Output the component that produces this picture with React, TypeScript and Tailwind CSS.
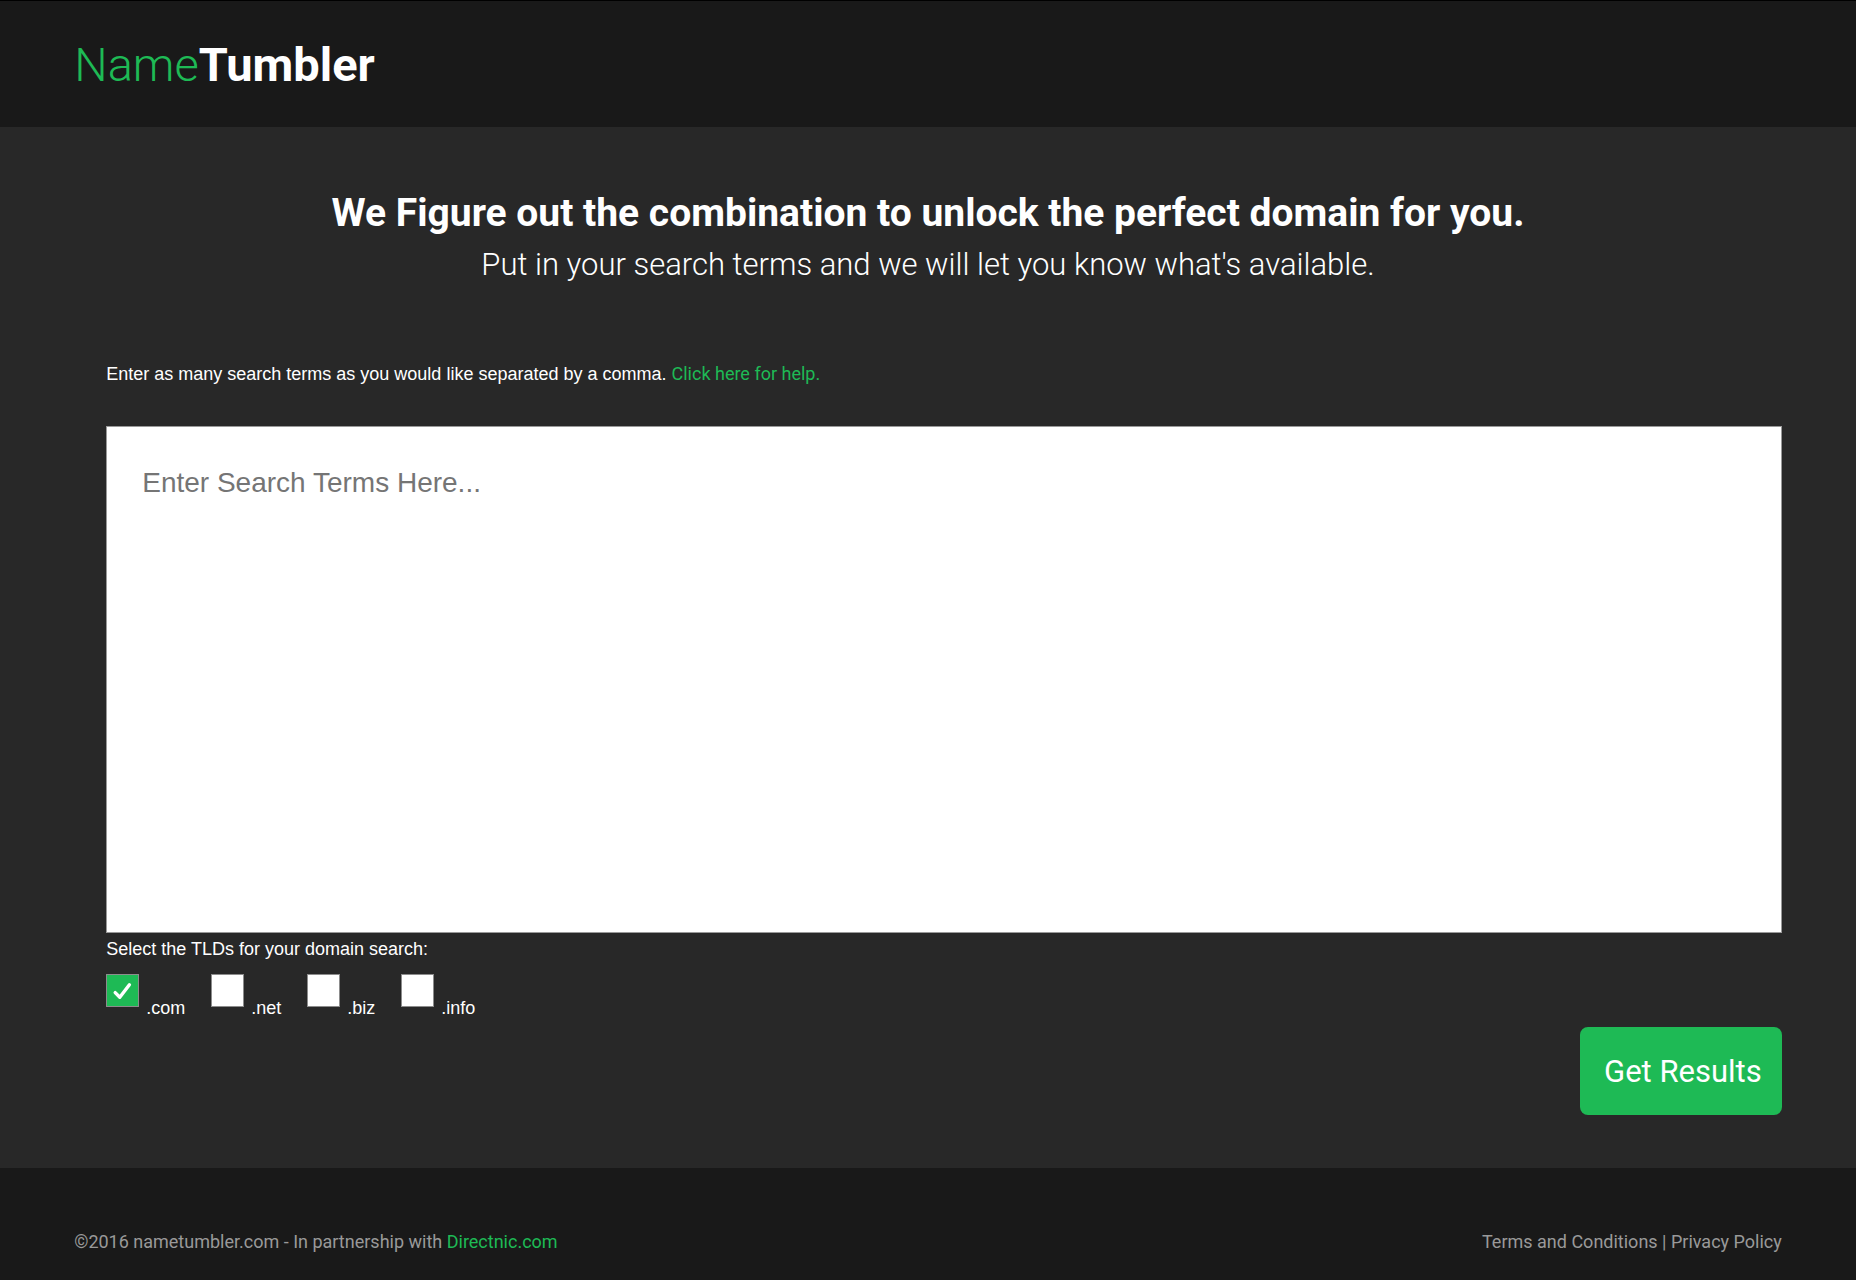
import { useState } from "react"

const TLDS = ["com", "net", "biz", "info"]

function Header() {
  return (
    <header className="border-t border-black bg-[#191919] px-[4%] pt-7 pb-[26px]">
      <a href="#" className="inline-block align-top text-[47px] leading-[72px] font-bold text-white">
        <span className="font-light text-[#1eba55]">Name</span>Tumbler
      </a>
    </header>
  )
}

interface TldOptionProps {
  tld: string
  checked: boolean
  onChange: () => void
}

function TldOption({ tld, checked, onChange }: TldOptionProps) {
  return (
    <label className="flex items-end gap-[7px]">
      <span className="relative mb-[15px] block size-[33px]">
        <input
          type="checkbox"
          checked={checked}
          onChange={onChange}
          className="block size-full appearance-none border border-[#8c8c8c] bg-white checked:bg-[#1eba55]"
        />
        {checked && (
          <svg
            viewBox="0 0 33 33"
            className="pointer-events-none absolute inset-0 size-full"
            fill="none"
            stroke="#fff"
            strokeWidth="3.4"
            strokeLinecap="round"
            strokeLinejoin="round"
          >
            <path d="M9.2 18.6 L13.8 23.2 L23.4 10.8" />
          </svg>
        )}
      </span>
      <span>.{tld}</span>
    </label>
  )
}

function SearchForm() {
  const [terms, setTerms] = useState("")
  const [selected, setSelected] = useState<string[]>(["com"])

  const toggle = (tld: string) => {
    setSelected((prev) => (prev.includes(tld) ? prev.filter((t) => t !== tld) : [...prev, tld]))
  }

  return (
    <form
      className="mt-[69px] pl-8 font-['Liberation_Sans',sans-serif] text-lg leading-7"
      onSubmit={(e) => e.preventDefault()}
    >
      <p>
        <label htmlFor="terms">Enter as many search terms as you would like separated by a comma.</label>{" "}
        <a href="#help" className="font-[Roboto,sans-serif] text-[#1eba55]">
          Click here for help.
        </a>
      </p>
      <textarea
        id="terms"
        value={terms}
        onChange={(e) => setTerms(e.target.value)}
        placeholder="Enter Search Terms Here..."
        className="mt-[38px] block h-[507px] w-full resize-none border border-[#999] bg-white p-[35px] text-[28px] leading-[42px] text-black placeholder:text-[#757575]"
      />
      <fieldset className="mt-[2px]">
        <legend>Select the TLDs for your domain search:</legend>
        <div className="mt-[11px] flex flex-wrap gap-x-[26px]">
          {TLDS.map((tld) => (
            <TldOption key={tld} tld={tld} checked={selected.includes(tld)} onChange={() => toggle(tld)} />
          ))}
        </div>
      </fieldset>
      <div className="mt-[5px] flex justify-end">
        <button
          type="submit"
          className="rounded-lg bg-[#1eba55] pt-[21px] pr-5 pb-[19px] pl-6 font-[Roboto,sans-serif] text-[31px] leading-[48px] text-white"
        >
          Get Results
        </button>
      </div>
    </form>
  )
}

function Footer() {
  return (
    <footer className="flex grow flex-wrap items-start justify-between bg-[#191919] px-[4%] pt-[60px] pb-6 text-lg leading-7 text-[#999]">
      <p>
        ©2016 nametumbler.com - In partnership with{" "}
        <a href="#directnic" className="text-[#1eba55]">
          Directnic.com
        </a>
      </p>
      <p>
        <a href="#terms-and-conditions">Terms and Conditions</a> | <a href="#privacy">Privacy Policy</a>
      </p>
    </footer>
  )
}

export default function App() {
  return (
    <div className="flex min-h-screen flex-col bg-[#282828] font-[Roboto,sans-serif] text-white">
      <Header />
      <main className="px-[4%] pt-[60px] pb-[53px]">
        <div className="text-center leading-[52px]">
          <h1 className="text-[39px] font-bold">We Figure out the combination to unlock the perfect domain for you.</h1>
          <h2 className="text-[31px] font-light">Put in your search terms and we will let you know what's available.</h2>
        </div>
        <SearchForm />
      </main>
      <Footer />
    </div>
  )
}
